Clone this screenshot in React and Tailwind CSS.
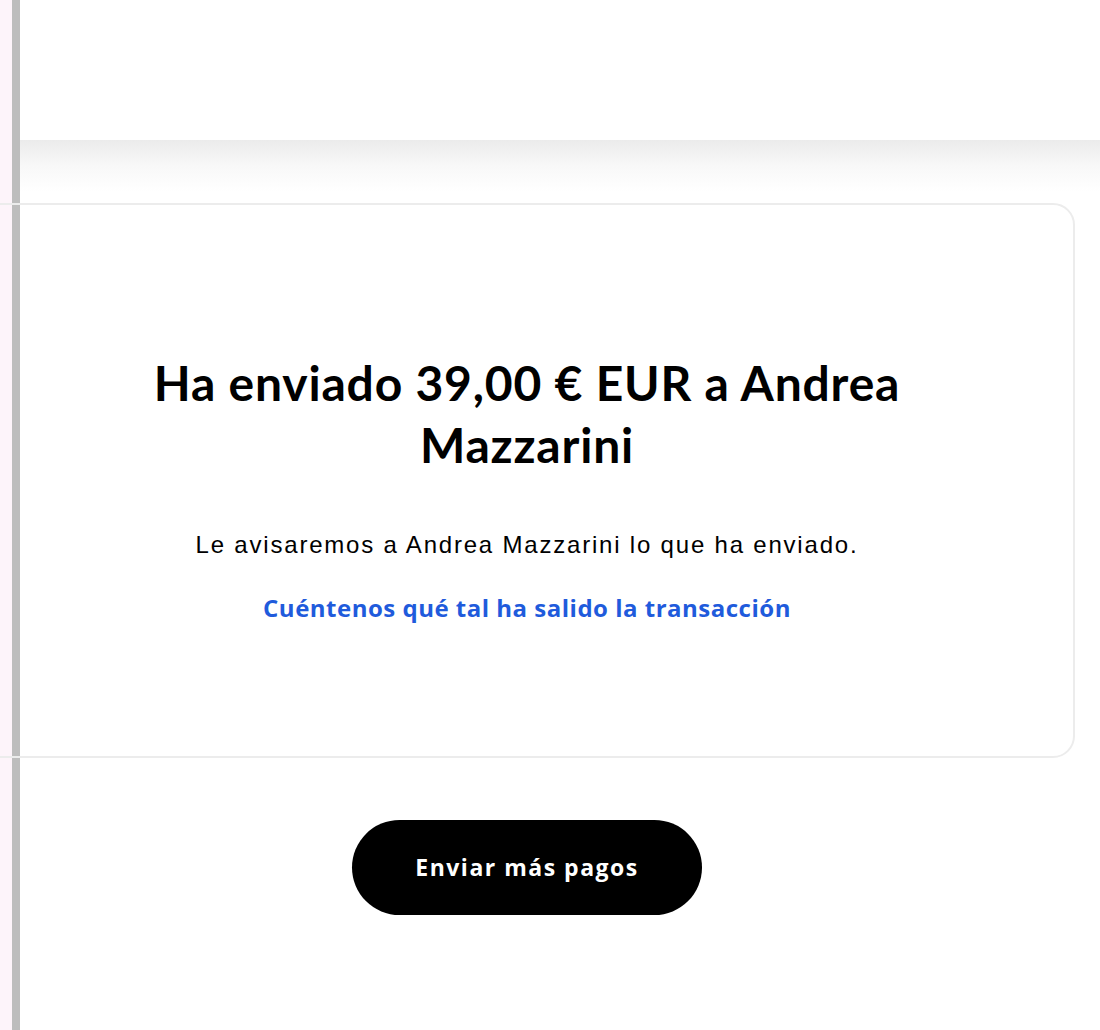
import React from 'react';

function App() {
    return (
        <div className='flex w-[1100px] h-[1030px] bg-white overflow-hidden' style={{fontFamily: 'Lato, "Liberation Sans", sans-serif'}}>
            <div className='w-[12px] h-full bg-[#fdf4fa] shrink-0'></div>
            <div className='w-[8px] h-full bg-[#bdbdbd] shrink-0'></div>
            <div className='flex-1 flex flex-col min-w-0'>
                <div className='h-[140px] bg-white'></div>
                <div className='h-[52px] bg-gradient-to-b from-[#ebebeb] via-[#f8f8f8] to-white'></div>
                <div className='ml-[-41px] w-[1096px] flex flex-col items-center pt-[11px]'>
                    <div className='w-full h-[555px] border-2 border-[#ececec] rounded-[22px] flex flex-col items-center pt-[147px]'>
                        <h1 className='text-[48px] leading-[62px] font-bold text-black text-center tracking-[0.8px] w-[800px]'>
                            Ha enviado 39,00 € EUR a Andrea Mazzarini
                        </h1>
                        <p className='mt-[54px] text-[24px] leading-[30px] text-black tracking-[1.8px]' style={{fontFamily: '"Liberation Sans", Arial, sans-serif'}}>
                            Le avisaremos a Andrea Mazzarini lo que ha enviado.
                        </p>
                        <a href='#' className='mt-[33px] text-[24px] leading-[30px] font-bold text-[#1f5bdc] tracking-[0.5px]' style={{fontFamily: '"Open Sans", sans-serif'}}>
                            Cuéntenos qué tal ha salido la transacción
                        </a>
                    </div>
                    <button className='mt-[62px] w-[350px] h-[95px] rounded-full bg-black text-white text-[23px] font-bold tracking-[1.5px]' style={{fontFamily: '"Open Sans", sans-serif'}}>
                        Enviar más pagos
                    </button>
                </div>
            </div>
        </div>
    )
}

export default App
